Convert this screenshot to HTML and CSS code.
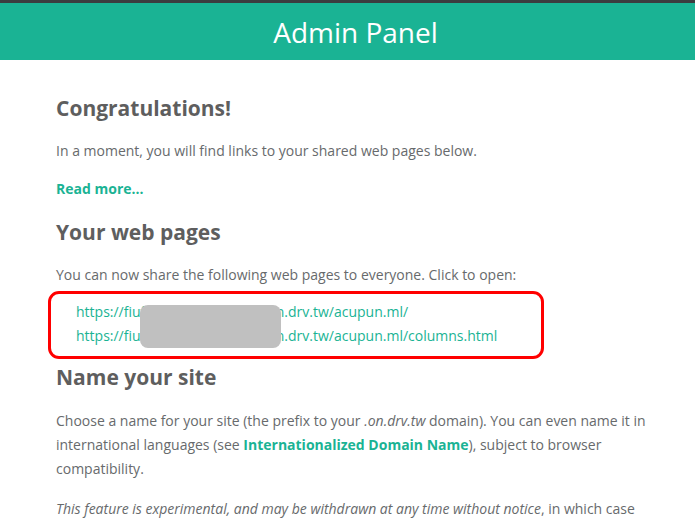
FILE: index.html
```html
<!DOCTYPE html>
<html lang="en">
<head>
    <meta charset="UTF-8" />
    <meta name="viewport" content="width=device-width, initial-scale=1.0" />
    <title>Admin Panel</title>
    <link rel="stylesheet" href="styles.css">
</head>
<body>
    <div class="topbar">
        <h1 class="title">Admin Panel</h1>
    </div>

    <div class="main">
        <h2>Congratulations!</h2>
        <p>In a moment, you will find links to your shared web pages below.</p>
        <p><a href="#" class="strong-link">Read more...</a></p>

        <h2>Your web pages</h2>
        <p>You can now share the following web pages to everyone. Click to open:</p>
        <ul class="page-links">
            <li><a href="#">https://fiufiuxxxxxxxxxxxxxxxon.drv.tw/acupun.ml/</a></li>
            <li><a href="#">https://fiufiuxxxxxxxxxxxxxxxon.drv.tw/acupun.ml/columns.html</a></li>
            <div class="redact"></div>
        </ul>

        <h2>Name your site</h2>
        <p class="long">Choose a name for your site (the prefix to your <em>.on.drv.tw</em> domain). You can even name it in international languages (see <a href="#" class="strong-link">Internationalized Domain Name</a>), subject to browser compatibility.</p>
        <p class="note"><em>This feature is experimental, and may be withdrawn at any time without notice</em>, in which case</p>
    </div>
</body>
</html>
```

FILE: styles.css
```css
body {
    margin: 0;
    font-family: "Open Sans", "Noto Sans", sans-serif;
    font-size: 14px;
    color: #676a6c;
    background: #fff;
}
.topbar {
    border-top: 3px solid #3b3d3f;
    background-color: #1ab394;
    height: 57px;
}
.title {
    margin: 0;
    padding-left: 16px;
    text-align: center;
    color: #fff;
    font-size: 28px;
    font-weight: normal;
    line-height: 58px;
}
.main {
    padding: 33px 30px 0 56px;
}
h2 {
    margin: 0;
    font-size: 21px;
    line-height: 30px;
    font-weight: 700;
    color: #5e5e5e;
}
p {
    margin: 0;
    line-height: 24px;
}
h2 + p {
    margin-top: 16px;
}
p + p {
    margin-top: 14px;
}
p + h2 {
    margin-top: 16px;
}
a {
    color: #1ab394;
    text-decoration: none;
}
.strong-link {
    font-weight: 700;
}
.page-links {
    position: relative;
    list-style: none;
    width: 465px;
    margin: 4px 0 3px -8px;
    padding: 6px 0 8px 25px;
    border: 3px solid #ff0000;
    border-radius: 11px;
    line-height: 24px;
}
.redact {
    position: absolute;
    left: 89px;
    top: 11px;
    width: 141px;
    height: 43px;
    background: #c0c0c0;
    border-radius: 8px;
}
.page-links + h2 {
    margin-top: 0;
}
.long {
    margin-top: 17px;
}
.note {
    margin-top: 16px;
}
```
